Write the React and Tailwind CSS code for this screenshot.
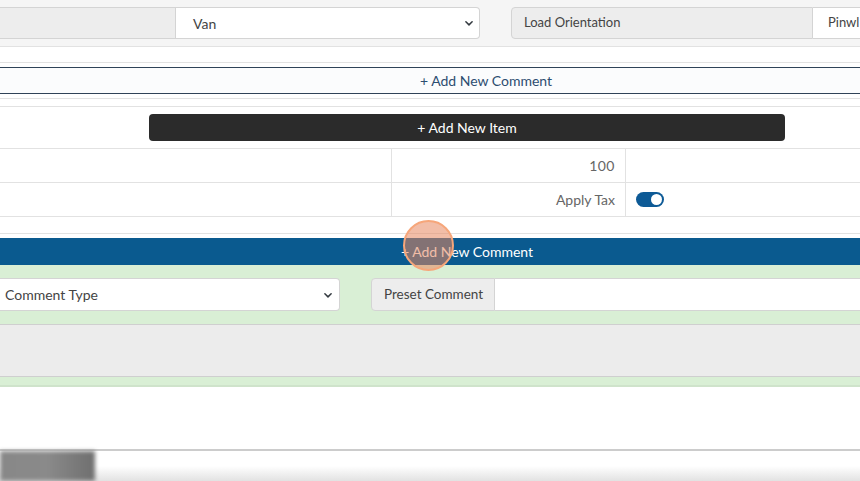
import React from "react";

const Chevron = () => (
  <svg width="10" height="10" viewBox="0 0 16 16" fill="none" stroke="#343a40" strokeWidth="2.4" strokeLinecap="round" strokeLinejoin="round">
    <path d="M3 6l5 5 5-5" />
  </svg>
);

export default function App() {
  return (
    <div className="w-[860px] h-[481px] overflow-hidden flex flex-col bg-white text-[#444] relative" style={{ fontFamily: "Lato, 'Open Sans', sans-serif" }}>
      {/* trailer details row */}
      <div className="h-[47px] bg-[#f5f5f5] pt-[7px] flex shrink-0 border-b border-[#e2e2e2]">
        <div className="w-[176px] h-[32px] bg-[#ededed] border-y border-r border-[#d4d4d4]" />
        <div className="w-[304px] h-[32px] bg-white border-y border-r border-[#d4d4d4] rounded-r-[4px] flex items-center justify-between pl-[17px] pr-[5px] text-[14px] text-[#444]">
          <span>Van</span>
          <Chevron />
        </div>
        <div className="w-[31px]" />
        <div className="w-[302px] h-[32px] bg-[#ededed] border border-[#d4d4d4] rounded-l-[4px] flex items-center pl-[12px] text-[13px] text-[#444]">
          Load Orientation
        </div>
        <div className="flex-1 h-[32px] bg-white border-y border-[#d4d4d4] flex items-center pl-[15px] text-[13px] text-[#444] whitespace-nowrap overflow-hidden">
          Pinwl
        </div>
      </div>

      <div className="h-[16px] border-b border-[#e2e2e2] shrink-0" />
      <div className="h-[4px] shrink-0" />
      <div className="h-[27px] shrink-0 border-y border-[#2f4358] bg-[#fbfcfd] flex items-center justify-center text-[14px] text-[#2d4d70]">
        <span className="ml-[112px]">+ Add New Comment</span>
      </div>
      <div className="h-[5px] border-b border-[#e2e2e2] shrink-0" />
      <div className="h-[8px] border-b border-[#e2e2e2] shrink-0" />

      {/* items */}
      <div className="h-[42px] shrink-0 flex pt-[7px] border-b border-[#e2e2e2]">
        <div className="w-[149px]" />
        <div className="w-[636px] h-[27px] bg-[#2b2b2b] rounded-[4px] flex items-center justify-center text-white text-[14px]">
          <span>+ Add New Item</span>
        </div>
      </div>
      <div className="h-[34px] shrink-0 flex border-b border-[#e2e2e2]">
        <div className="w-[392px] border-r border-[#e2e2e2]" />
        <div className="w-[234px] border-r border-[#e2e2e2] flex items-center justify-end pr-[10px] text-[14px] text-[#666] tracking-[0.5px]">100</div>
        <div className="flex-1" />
      </div>
      <div className="h-[34px] shrink-0 flex border-b border-[#e2e2e2]">
        <div className="w-[392px] border-r border-[#e2e2e2]" />
        <div className="w-[234px] border-r border-[#e2e2e2] flex items-center justify-end pr-[10px] text-[14px] text-[#666]">Apply Tax</div>
        <div className="flex-1 flex items-center pl-[10px]">
          <div className="w-[28px] h-[15px] rounded-full bg-[#0d5a96] flex items-center justify-end pr-[2px]">
            <div className="w-[11px] h-[11px] rounded-full bg-white" />
          </div>
        </div>
      </div>
      <div className="h-[17px] shrink-0 border-b border-[#e2e2e2]" />
      <div className="h-[4px] shrink-0" />
      <div className="h-[27px] shrink-0 bg-[#0a5a8f] flex items-center justify-center text-white text-[14px]">
        <span className="ml-[74px]">+ Add New Comment</span>
      </div>

      {/* comment editor */}
      <div className="h-[122px] shrink-0 bg-[#d9efd5] flex flex-col pt-[13px] border-b-2 border-[#cfe3cb]">
        <div className="flex h-[33px]">
          <div className="w-[340px] bg-white border-y border-r border-[#d4d4d4] rounded-r-[4px] flex items-center justify-between pl-[5px] pr-[6px] text-[14px] text-[#444]">
            <span>Comment Type</span>
            <Chevron />
          </div>
          <div className="w-[31px]" />
          <div className="w-[124px] bg-[#ededed] border border-[#d4d4d4] rounded-l-[4px] flex items-center pl-[12px] text-[13.5px] text-[#444]">
            Preset Comment
          </div>
          <div className="flex-1 bg-white border-y border-[#d4d4d4]" />
        </div>
        <div className="h-[13px]" />
        <div className="h-[53px] bg-[#ececec] border-y border-[#cfcfcf]" />
      </div>

      <div className="h-[64px] shrink-0 border-b-2 border-[#cccccc]" />

      {/* blurred strip at the bottom */}
      <div className="flex-1 flex bg-gradient-to-b from-white via-white to-[#e2e2e2]">
        <div className="w-[95px] bg-gradient-to-r from-[#888] via-[#8a8a8a] to-[#6f6f6f] blur-[2px]" />
        <div className="flex-1" />
      </div>

      {/* click highlight */}
      <div className="absolute left-[403px] top-[220px] w-[51px] h-[51px] rounded-full bg-[#e8875f]/55 border-2 border-[#f6a67a]" />
    </div>
  );
}
